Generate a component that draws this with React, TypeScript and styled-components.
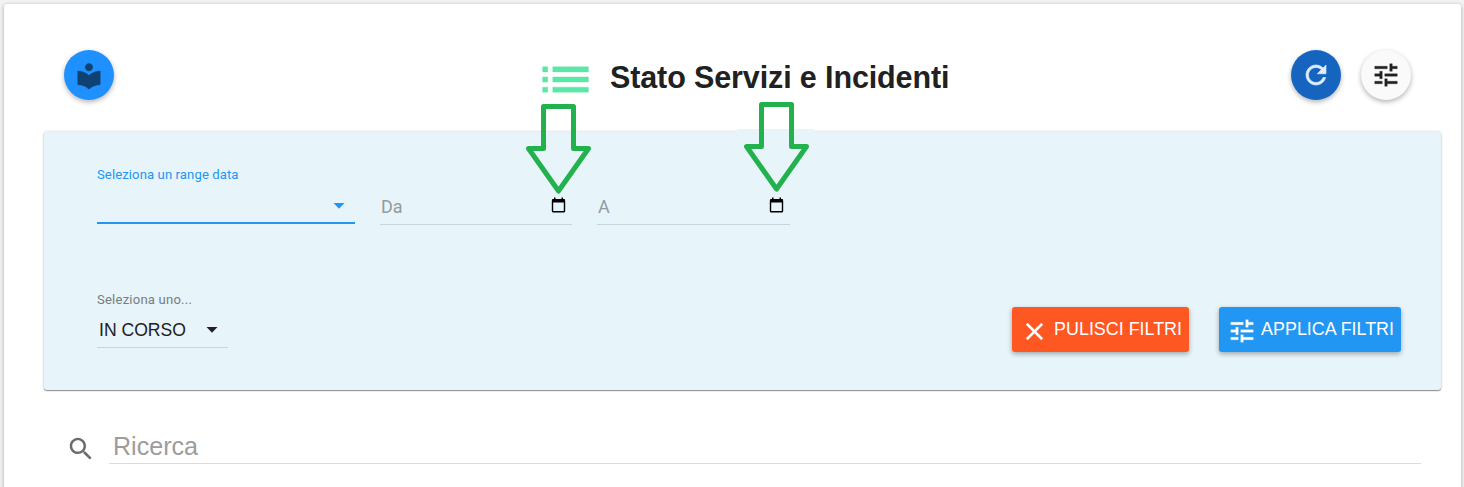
import React from 'react';
import styled, { createGlobalStyle } from 'styled-components';

const GlobalStyle = createGlobalStyle`
  * { box-sizing: border-box; }
  body {
    margin: 0;
    height: 487px;
    overflow: hidden;
    background: #f3f3f3;
    font-family: "Liberation Sans", Arial, sans-serif;
    color: #212121;
  }
`;

const Page = styled.main`
  position: relative;
  height: 487px;
  padding: 4px 3px 0 4px;
  overflow: hidden;
`;

const Card = styled.section`
  height: 520px;
  padding: 46px 20px 0 40px;
  background: #fff;
  border-radius: 3px;
  box-shadow: 0 1px 4px rgba(0, 0, 0, 0.32);
`;

const Header = styled.header`
  display: flex;
  align-items: flex-start;
  height: 81.5px;
  padding: 0 30px 0 20px;
`;

const RoundButton = styled.button<{ $bg: string; $fg: string; $drop?: number }>`
  display: flex;
  align-items: center;
  justify-content: center;
  flex: none;
  width: 50px;
  height: 50px;
  padding: ${(p) => p.$drop ?? 0}px 0 0 0;
  border: 0;
  border-radius: 50%;
  background: ${(p) => p.$bg};
  color: ${(p) => p.$fg};
  box-shadow: 0 2px 5px rgba(0, 0, 0, 0.3);
`;

const TitleGroup = styled.div`
  display: flex;
  flex: 1;
  height: 60px;
  padding-left: 420.5px;
`;

const ListMark = styled.div`
  flex: none;
  width: 61px;
  height: 61px;
  margin-top: -1px;
  color: #5ce6a8;
`;

const Title = styled.h1`
  margin: 9px 0 0 14.5px;
  font-size: 30.5px;
  line-height: 37px;
  font-weight: 700;
  letter-spacing: -0.12px;
  white-space: nowrap;
`;

const Actions = styled.div`
  display: flex;
  gap: 20px;
`;

const Panel = styled.section`
  height: 258.5px;
  padding: 35px 40px 0 53px;
  background: #e7f4fa;
  border-radius: 3px;
  box-shadow: 0 1px 1px rgba(0, 0, 0, 0.4), 0 0 3px rgba(0, 0, 0, 0.22);
`;

const FilterRow = styled.div`
  display: flex;
  gap: 25px;
  height: 125px;
`;

const Field = styled.div<{ $width: number; $height: number; $active?: boolean }>`
  display: flex;
  flex-direction: column;
  justify-content: space-between;
  width: ${(p) => p.$width}px;
  height: ${(p) => p.$height}px;
  border-bottom: ${(p) => (p.$active ? '2px solid #2196f3' : '1px solid #c8d3da')};
`;

const Label = styled.label<{ $active?: boolean }>`
  font-family: Roboto, sans-serif;
  font-size: 13.1px;
  line-height: 16px;
  letter-spacing: ${(p) => (p.$active ? 0.1 : 0.2)}px;
  white-space: nowrap;
  color: ${(p) => (p.$active ? '#2196f3' : '#757d81')};
`;

const SelectValue = styled.div<{ $active?: boolean }>`
  display: flex;
  align-items: center;
  justify-content: space-between;
  height: ${(p) => (p.$active ? 32 : 34)}px;
  padding: 0 10px 0 2px;
  font-size: 17.6px;
  color: ${(p) => (p.$active ? '#2196f3' : '#212121')};
`;

const DateValue = styled.div`
  display: flex;
  align-items: center;
  justify-content: space-between;
  height: 35px;
  margin-top: auto;
  padding: 0 6px 0 1px;
  font-family: Roboto, sans-serif;
  font-size: 18px;
  color: #929b9f;
  svg { margin-bottom: 2px; }
`;

const BottomRow = styled.div`
  display: flex;
  justify-content: space-between;
`;

const Buttons = styled.div`
  display: flex;
  gap: 30px;
  padding-top: 15px;
`;

const FilterButton = styled.button<{ $bg: string; $width: number }>`
  display: flex;
  align-items: center;
  justify-content: space-between;
  width: ${(p) => p.$width}px;
  height: 45px;
  padding: 0 7px 0 8px;
  border: 0;
  border-radius: 3px;
  background: ${(p) => p.$bg};
  color: #fff;
  font: 17.9px "Liberation Sans", Arial, sans-serif;
  white-space: nowrap;
  box-shadow: 0 2px 5px rgba(0, 0, 0, 0.32);
  svg { margin-top: 4px; }
`;

const Search = styled.div`
  display: flex;
  align-items: flex-start;
  padding: 37px 20px 0 22px;
  gap: 13px;
  color: #6c6c6c;
  svg { margin: 7px 0 0; }
`;

const SearchInput = styled.div`
  flex: 1;
  height: 37px;
  padding-left: 4px;
  border-bottom: 1px solid #dcdcdc;
  font-size: 25.1px;
  line-height: 39px;
  color: #9c9c9c;
`;

const PointerLayer = styled.svg`
  position: absolute;
  left: 0;
  top: 0;
  pointer-events: none;
`;

const paths = {
  library:
    'M12 11.55C9.64 9.35 6.48 8 3 8v11c3.48 0 6.64 1.35 9 3.55 2.36-2.19 5.52-3.55 9-3.55V8c-3.48 0-6.64 1.35-9 3.55zM12 8c1.66 0 3-1.34 3-3s-1.34-3-3-3-3 1.34-3 3 1.34 3 3 3z',
  list: 'M3 13h2v-2H3v2zm0 4h2v-2H3v2zm0-8h2V7H3v2zm4 4h14v-2H7v2zm0 4h14v-2H7v2zM7 7v2h14V7H7z',
  refresh:
    'M17.65 6.35C16.2 4.9 14.21 4 12 4c-4.42 0-7.99 3.58-7.99 8s3.57 8 7.99 8c3.73 0 6.84-2.55 7.73-6h-2.08c-.82 2.33-3.04 4-5.65 4-3.31 0-6-2.69-6-6s2.69-6 6-6c1.66 0 3.14.69 4.22 1.78L13 11h7V4l-2.35 2.35z',
  tune: 'M3 17v2h6v-2H3zM3 5v2h10V5H3zm10 16v-2h8v-2h-8v-2h-2v6h2zM7 9v2H3v2h4v2h2V9H7zm14 4v-2H11v2h10zm-6-4h2V7h4V5h-4V3h-2v6z',
  close:
    'M19 6.41L17.59 5 12 10.59 6.41 5 5 6.41 10.59 12 5 17.59 6.41 19 12 13.41 17.59 19 19 17.59 13.41 12z',
  search:
    'M15.5 14h-.79l-.28-.27C15.41 12.59 16 11.11 16 9.5 16 5.91 13.09 3 9.5 3S3 5.91 3 9.5 5.91 16 9.5 16c1.61 0 3.09-.59 4.23-1.57l.27.28v.79l5 4.99L20.49 19l-4.99-5zm-6 0C7.01 14 5 11.99 5 9.5S7.01 5 9.5 5 14 7.01 14 9.5 11.99 14 9.5 14z',
};

const Icon = ({ name, size, weight = 0 }: { name: keyof typeof paths; size: number; weight?: number }) => (
  <svg width={size} height={size} viewBox="0 0 24 24" fill="currentColor" stroke="currentColor" strokeWidth={weight}>
    <path d={paths[name]} />
  </svg>
);

const Caret = () => (
  <svg width="12" height="6" viewBox="0 0 12 6" fill="currentColor">
    <path d="M0.5 0h11L6 5.7z" />
  </svg>
);

const CalendarIcon = () => (
  <svg width="15" height="16" viewBox="0 0 15 16" fill="none">
    <rect x="1.5" y="3" width="12" height="11.7" rx="0.8" stroke="#000" strokeWidth="1.4" />
    <path d="M2 2h1V.5h1.5V2h6V.5H12V2h1q1 0 1 1v2.6H1V3q0-1 1-1z" fill="#000" />
  </svg>
);

export default function App() {
  return (
    <>
      <GlobalStyle />
      <Page>
        <Card>
          <Header>
            <RoundButton $bg="#1e90ff" $fg="#0f4272" $drop={2} aria-label="Guida">
              <Icon name="library" size={30} weight={0.3} />
            </RoundButton>
            <TitleGroup>
              <ListMark>
                <Icon name="list" size={61} weight={0.15} />
              </ListMark>
              <Title>Stato Servizi e Incidenti</Title>
            </TitleGroup>
            <Actions>
              <RoundButton $bg="#1565c0" $fg="#e0edfa" aria-label="Aggiorna">
                <Icon name="refresh" size={30} weight={0.5} />
              </RoundButton>
              <RoundButton $bg="#fafafa" $fg="#212121" aria-label="Filtri">
                <Icon name="tune" size={30} weight={0.25} />
              </RoundButton>
            </Actions>
          </Header>
          <Panel>
            <FilterRow>
              <Field $width={258} $height={57.5} $active>
                <Label $active>Seleziona un range data</Label>
                <SelectValue $active>
                  <span />
                  <Caret />
                </SelectValue>
              </Field>
              <Field $width={192} $height={58}>
                <DateValue>
                  Da
                  <CalendarIcon />
                </DateValue>
              </Field>
              <Field $width={193} $height={58}>
                <DateValue>
                  A
                  <CalendarIcon />
                </DateValue>
              </Field>
            </FilterRow>
            <BottomRow>
              <Field $width={131} $height={56.5}>
                <Label>Seleziona uno...</Label>
                <SelectValue>
                  IN CORSO
                  <Caret />
                </SelectValue>
              </Field>
              <Buttons>
                <FilterButton $bg="#ff5722" $width={177}>
                  <Icon name="close" size={29} weight={0.2} />
                  PULISCI FILTRI
                </FilterButton>
                <FilterButton $bg="#2196f3" $width={182}>
                  <Icon name="tune" size={30} weight={0.2} />
                  APPLICA FILTRI
                </FilterButton>
              </Buttons>
            </BottomRow>
          </Panel>
          <Search>
            <Icon name="search" size={30} />
            <SearchInput>Ricerca</SearchInput>
          </Search>
        </Card>
        <PointerLayer width="1464" height="200" viewBox="0 0 1464 200" fill="none">
          <path d="M737 129h77v4h-77z" fill="#e7f4fa" />
          <g stroke="#22b14c" strokeWidth="5" strokeLinejoin="round">
            <path d="M543.5 106.5h30v42h15l-30 42.5-30-42.5h15z" />
            <path d="M761.5 104.5h30v42h15l-30 42.5-30-42.5h15z" />
          </g>
        </PointerLayer>
      </Page>
    </>
  );
}
